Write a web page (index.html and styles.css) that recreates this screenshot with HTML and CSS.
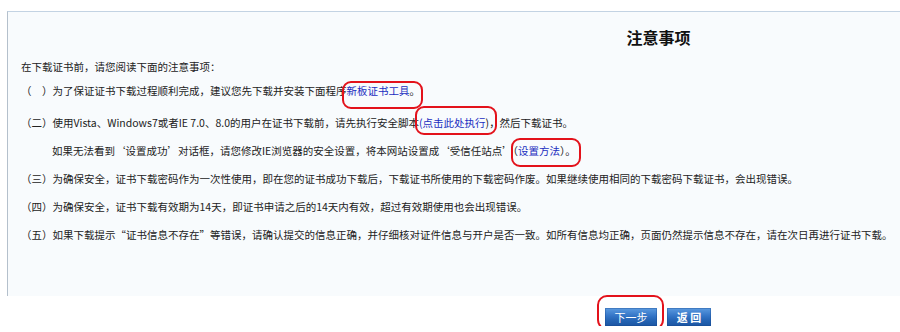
FILE: index.html
```html
<!DOCTYPE html>
<html lang="zh-CN">
<head>
<meta charset="utf-8">
<title>注意事项</title>
<link rel="stylesheet" href="styles.css">
</head>
<body>
<div class="page">
  <div class="notice">
    <h1 class="title">注意事项</h1>
    <p class="line">在下载证书前，请您阅读下面的注意事项：</p>
    <p class="line line-first">（　）为了保证证书下载过程顺利完成，建议您先下载并安装下面程序<span class="mark mark-1"><a class="link" href="#">新板证书工具</a>。</span></p>
    <p class="line">（二）使用Vista、Windows7或者IE 7.0、8.0的用户在证书下载前，请先执行安全脚本<span class="mark mark-2"><a class="link" href="#">(点击此处执行</a>)</span>，然后下载证书。</p>
    <p class="line line-indent">如果无法看到‘设置成功’对话框，请您修改IE浏览器的安全设置，将本网站设置成‘受信任站点’<span class="mark mark-3">（<a class="link" href="#">设置方法</a>）。</span></p>
    <p class="line">（三）为确保安全，证书下载密码作为一次性使用，即在您的证书成功下载后，下载证书所使用的下载密码作废。如果继续使用相同的下载密码下载证书，会出现错误。</p>
    <p class="line">（四）为确保安全，证书下载有效期为14天，即证书申请之后的14天内有效，超过有效期使用也会出现错误。</p>
    <p class="line">（五）如果下载提示“证书信息不存在”等错误，请确认提交的信息正确，并仔细核对证件信息与开户是否一致。如所有信息均正确，页面仍然提示信息不存在，请在次日再进行证书下载。</p>
  </div>
  <div class="actions">
    <span class="mark mark-btn"><button class="btn btn-next" type="button">下一步</button></span>
    <button class="btn btn-back" type="button">返 回</button>
  </div>
</div>
</body>
</html>
```

FILE: styles.css
```css
html, body {
  margin: 0;
  padding: 0;
  background: #ffffff;
}

body {
  font-family: "Noto Sans CJK SC", "Liberation Sans", sans-serif;
  font-size: 10.5px;
  color: #222222;
}

.page {
  padding: 11px 0 0 7px;
}

.notice {
  background: #f8fbfd;
  border-top: 1px solid #c3d3e3;
  border-left: 1px solid #b4c0cc;
  padding: 0 13px 47px 13px;
}

.title {
  margin: 13px 0 4px;
  padding-left: 409px;
  font-size: 16px;
  line-height: 24px;
  font-weight: bold;
  text-align: center;
  color: #111111;
}

.line {
  margin: 0;
  line-height: 28px;
  white-space: nowrap;
}

.line-first {
  line-height: 20px;
  margin-bottom: 8px;
}

.line-indent {
  padding-left: 31px;
}

.link {
  color: #1a2ec0;
  text-decoration: none;
}

.mark {
  position: relative;
}

.mark::after {
  content: "";
  position: absolute;
  border: 2px solid #e3121b;
  border-radius: 9px;
  pointer-events: none;
}

.mark-1::after {
  top: -2px;
  bottom: -11px;
  left: -5px;
  right: -3px;
}

.mark-2::after {
  top: -9px;
  bottom: -5px;
  left: -4px;
  right: -8px;
}

.mark-3::after {
  top: -5px;
  bottom: -9px;
  left: -2px;
  right: -5px;
}

.actions {
  display: flex;
  justify-content: center;
  gap: 10px;
  margin-top: 12px;
  padding-left: 409px;
}

.mark-btn {
  display: block;
}

.mark-btn::after {
  top: -13px;
  bottom: -4px;
  left: -8px;
  right: -7px;
  border-radius: 10px;
}

.btn {
  display: block;
  height: 18px;
  padding: 0;
  border: 0;
  color: #ffffff;
  font-family: "Noto Sans CJK SC", "Liberation Sans", sans-serif;
  font-size: 11px;
  line-height: 18px;
  background: linear-gradient(#5c9be0, #3374c6 45%, #2463b3 70%, #1b55a2);
  box-shadow: inset 0 0 0 1px rgba(20, 70, 140, 0.35);
}

.btn-next {
  width: 52px;
}

.btn-back {
  width: 44px;
  font-weight: bold;
}
```
